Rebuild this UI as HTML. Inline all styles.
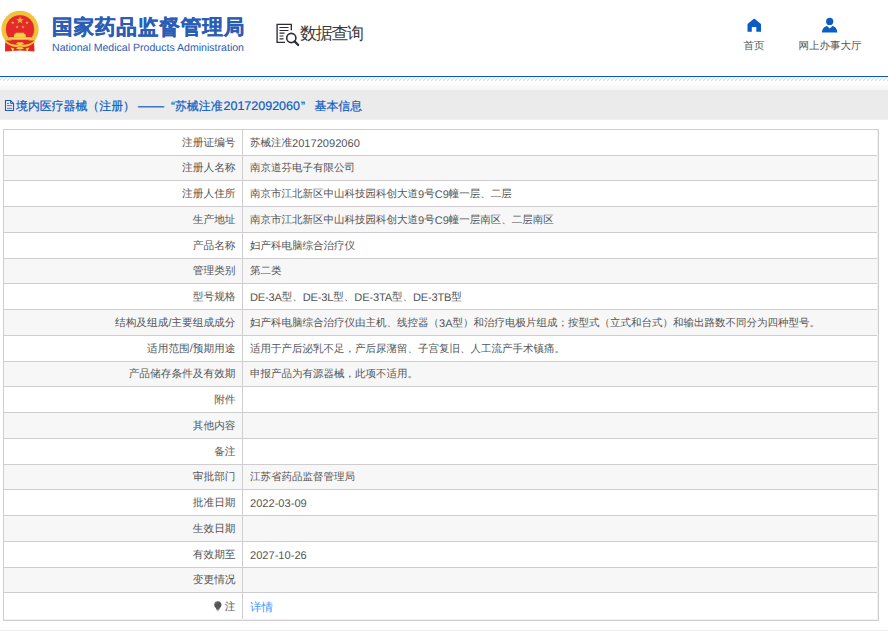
<!DOCTYPE html>
<html><head><meta charset="utf-8">
<style>
*{margin:0;padding:0;box-sizing:border-box}
html,body{width:888px;height:631px;overflow:hidden;background:#fff;font-family:"Liberation Sans",sans-serif;text-rendering:geometricPrecision}
.abs{position:absolute}
#logo-cn{position:absolute;left:52px;top:12.5px;font-size:20.6px;letter-spacing:0.86px;font-weight:bold;-webkit-text-stroke:0.35px #2a5db5;color:#2a5db5;white-space:nowrap;line-height:30px}
#logo-en{position:absolute;left:52px;top:41.3px;font-size:10.57px;color:#2a5db5;white-space:nowrap;line-height:14px}
#sjcx{position:absolute;left:300px;top:21.5px;font-size:17px;letter-spacing:-1.3px;color:#3a3a3a;line-height:24px;white-space:nowrap}
.nav{position:absolute;top:39px;font-size:10.5px;color:#555;line-height:14px;white-space:nowrap;text-align:center}
#blue{position:absolute;left:0;top:76px;width:888px;height:1px;background:#0a5cc0}
#hatch{position:absolute;left:0;top:77px;width:888px;height:5px}
#grad{position:absolute;left:0;top:82px;width:888px;height:8px;background:linear-gradient(#fff,#f4f4f4)}
#bar{position:absolute;left:0;top:90px;width:888px;height:30px;background:#ebebeb}
#title{position:absolute;left:16px;top:97px;font-size:11.9px;color:#0b5cc6;-webkit-text-stroke:0.2px #0b5cc6;line-height:18px;white-space:nowrap}
#title span{position:absolute;top:0}
#tbl{position:absolute;left:3px;top:129px;width:876px;height:492px;border:1px solid #d0cdd0}
.row{position:absolute;left:0;width:874px}
.hl{position:absolute;left:0;width:874px;height:1px;background:#d0cdd0}
.k{position:absolute;left:0;top:0;width:238px;height:100%;text-align:right;padding-right:6.5px;padding-top:2.4px;font-size:10.7px;color:#555;display:flex;align-items:center;justify-content:flex-end;white-space:nowrap}
.v{position:absolute;left:239px;top:0;right:0;height:100%;padding-left:7px;padding-top:2.4px;font-size:10.5px;color:#555;display:flex;align-items:center;white-space:nowrap}
#vl{position:absolute;left:238px;top:0;width:1px;height:490px;background:#d0cdd0}
.link{color:#3d95fb;font-size:11.6px;position:relative;top:0.6px}
.lat{font-size:11.1px}
.lat2{letter-spacing:-0.18px}
.bulb{margin-right:2.6px;position:relative;top:-1.6px}
#bottomline{position:absolute;left:0;top:630px;width:888px;height:1px;background:#ececec}
</style></head><body>
<svg class="abs" style="left:0;top:0" width="44" height="56" viewBox="0 0 44 56">
  <circle cx="20" cy="29.3" r="18.6" fill="#f2c23a"/>
  <circle cx="20" cy="29.3" r="14.6" fill="#d8b43a"/>
  <circle cx="20" cy="29.3" r="14.1" fill="#e8282a"/>
  <path d="M20.00,16.20 L20.96,18.97 L23.90,19.03 L21.56,20.81 L22.41,23.62 L20.00,21.94 L17.59,23.62 L18.44,20.81 L16.10,19.03 L19.04,18.97Z" fill="#d8b83a"/>
  <path d="M12.80,20.80 L13.25,22.09 L14.61,22.11 L13.52,22.93 L13.92,24.24 L12.80,23.46 L11.68,24.24 L12.08,22.93 L10.99,22.11 L12.35,22.09Z M27.00,20.80 L27.45,22.09 L28.81,22.11 L27.72,22.93 L28.12,24.24 L27.00,23.46 L25.88,24.24 L26.28,22.93 L25.19,22.11 L26.55,22.09Z M17.10,25.10 L17.55,26.39 L18.91,26.41 L17.82,27.23 L18.22,28.54 L17.10,27.76 L15.98,28.54 L16.38,27.23 L15.29,26.41 L16.65,26.39Z M23.00,25.10 L23.45,26.39 L24.81,26.41 L23.72,27.23 L24.12,28.54 L23.00,27.76 L21.88,28.54 L22.28,27.23 L21.19,26.41 L22.55,26.39Z" fill="#d2b240"/>
  <path d="M15.3 34.2 L15.6 32.7 L24.1 32.7 L24.4 34.2 H25.7 V37.2 H14 V34.2 Z" fill="#f3cf45"/>
  <path d="M8.8 37.2 H31.5 V39.7 H8.8 Z" fill="#f6d84a"/>
  <path d="M5.2 40.4 L34 40.4 L34.5 51.6 L28 51 L20 50.5 L12 51 L5 51.6 Z" fill="#e3262a"/>
  <path d="M5 40 Q12 46 20 44.6 Q28 46 35 40 L35 42.2 Q28 48.2 20 46.6 Q12 48.2 5 42.2 Z" fill="#f2c53a"/>
  <path d="M16 43.8 Q18 41 20 42.6 Q22 41 24 43.8 Q20 46.5 16 43.8 Z" fill="#f2c53a"/>
  <path d="M16 48.2 Q20 45.8 24 48.2 Q20 50.6 16 48.2 Z M11 47.4 L14.2 48.4 L13.2 51.5 L12.2 51.5 Z M29 47.4 L25.8 48.4 L26.8 51.5 L27.8 51.5 Z" fill="#f3d043"/>
</svg>
<div id="logo-cn">国家药品监督管理局</div>
<div id="logo-en">National Medical Products Administration</div>
<svg class="abs" style="left:274px;top:22px" width="28" height="26" viewBox="0 0 28 26">
  <path d="M17.3 8.3V2.3H3.1V20.4H11" fill="none" stroke="#2b2b3a" stroke-width="1.35"/>
  <path d="M5.5 5.5H14.5M5.5 8.5H14.5M5.5 11.2H10.5M5.5 14H9.5M5.5 16.8H9.5" stroke="#2b2b3a" stroke-width="1.2"/>
  <circle cx="17.3" cy="16" r="4.6" fill="none" stroke="#2b2b3a" stroke-width="1.6"/>
  <path d="M20.6 19.4L24.2 23" stroke="#2b2b3a" stroke-width="2.2" stroke-linecap="round"/>
</svg>
<div id="sjcx">数据查询</div>
<svg class="abs" style="left:747px;top:18px" width="15" height="14" viewBox="0 0 15 14">
  <path d="M7.2 0.6 L14 6 V13.7 H9.3 V9.1 H4.8 V13.7 H0.5 V6 Z" fill="#0a5bc6"/>
</svg>
<div class="nav" style="left:734px;width:40px">首页</div>
<svg class="abs" style="left:821px;top:17px" width="17" height="16" viewBox="0 0 17 16">
  <circle cx="8.7" cy="4.4" r="3.6" fill="#0b5cc5"/>
  <path d="M1 15.5 C1 12 3.5 9.3 6 9 L8.7 11.5 L11.4 9 C14 9.3 16.3 12 16.3 15.5 Z" fill="#0b5cc5"/>
</svg>
<div class="nav" style="left:790px;width:80px">网上办事大厅</div>
<div id="blue"></div><svg id="hatch" width="888" height="5"><defs><pattern id="hp" width="4" height="4" patternUnits="userSpaceOnUse" x="3"><path d="M5 -1 L-1 5" stroke="#e0e0e0" stroke-width="1.25"/></pattern></defs><rect x="0" y="0" width="888" height="4" fill="url(#hp)"/></svg><div id="grad"></div><div id="bar"></div><div style="position:absolute;left:0;top:119px;width:888px;height:1px;background:#ebeef5"></div>
<svg class="abs" style="left:0;top:95px" width="20" height="20" viewBox="0 0 20 20">
  <path d="M5.5 5.5H10.6L13.5 8.4V15.5H5.5Z" fill="none" stroke="#1f5cc8" stroke-width="1.1"/>
  <path d="M10.6 5.5V8.4H13.5" fill="none" stroke="#1f5cc8" stroke-width="1"/>
  <path d="M7 8.5H9M7 10.6H12M7 13.4H12" fill="none" stroke="#5a6ad0" stroke-width="0.9"/>
</svg>
<div id="title"><span style="left:0">境内医疗器械（注册）</span><span id="t2" style="left:122px;font-size:13px">——</span><span id="t3" style="left:155px">“苏械注准</span><span id="t5" style="left:207.5px;font-size:12.5px">20172092060</span><span id="t6" style="left:285px">”</span><span id="t4" style="left:298.5px">基本信息</span></div>
<div id="tbl">
<div class="row" style="top:0px;height:25px;background:#fff"><div class="k">注册证编号</div><div class="v">苏械注准<span class="lat">20172092060</span></div></div>
<div class="hl" style="top:25px"></div>
<div class="row" style="top:26px;height:24px;background:#f7f7f7"><div class="k">注册人名称</div><div class="v">南京道芬电子有限公司</div></div>
<div class="hl" style="top:50px"></div>
<div class="row" style="top:51px;height:25px;background:#fff"><div class="k">注册人住所</div><div class="v">南京市江北新区中山科技园科创大道<span class="lat">9</span>号<span class="lat">C9</span>幢一层、二层</div></div>
<div class="hl" style="top:76px"></div>
<div class="row" style="top:77px;height:25px;background:#f7f7f7"><div class="k">生产地址</div><div class="v">南京市江北新区中山科技园科创大道<span class="lat">9</span>号<span class="lat">C9</span>幢一层南区、二层南区</div></div>
<div class="hl" style="top:102px"></div>
<div class="row" style="top:103px;height:25px;background:#fff"><div class="k">产品名称</div><div class="v">妇产科电脑综合治疗仪</div></div>
<div class="hl" style="top:128px"></div>
<div class="row" style="top:129px;height:24px;background:#f7f7f7"><div class="k">管理类别</div><div class="v">第二类</div></div>
<div class="hl" style="top:153px"></div>
<div class="row" style="top:154px;height:25px;background:#fff"><div class="k">型号规格</div><div class="v"><span class="lat lat2">DE-3A</span>型、<span class="lat lat2">DE-3L</span>型、<span class="lat lat2">DE-3TA</span>型、<span class="lat lat2">DE-3TB</span>型</div></div>
<div class="hl" style="top:179px"></div>
<div class="row" style="top:180px;height:25px;background:#f7f7f7"><div class="k">结构及组成/主要组成成分</div><div class="v">妇产科电脑综合治疗仪由主机、线控器（<span class="lat">3A</span>型）和治疗电极片组成；按型式（立式和台式）和输出路数不同分为四种型号。</div></div>
<div class="hl" style="top:205px"></div>
<div class="row" style="top:206px;height:25px;background:#fff"><div class="k">适用范围/预期用途</div><div class="v">适用于产后泌乳不足，产后尿潴留、子宫复旧、人工流产手术镇痛。</div></div>
<div class="hl" style="top:231px"></div>
<div class="row" style="top:232px;height:24px;background:#f7f7f7"><div class="k">产品储存条件及有效期</div><div class="v">申报产品为有源器械，此项不适用。</div></div>
<div class="hl" style="top:256px"></div>
<div class="row" style="top:257px;height:25px;background:#fff"><div class="k">附件</div><div class="v"></div></div>
<div class="hl" style="top:282px"></div>
<div class="row" style="top:283px;height:25px;background:#f7f7f7"><div class="k">其他内容</div><div class="v"></div></div>
<div class="hl" style="top:308px"></div>
<div class="row" style="top:309px;height:25px;background:#fff"><div class="k">备注</div><div class="v"></div></div>
<div class="hl" style="top:334px"></div>
<div class="row" style="top:335px;height:24px;background:#f7f7f7"><div class="k">审批部门</div><div class="v">江苏省药品监督管理局</div></div>
<div class="hl" style="top:359px"></div>
<div class="row" style="top:360px;height:25px;background:#fff"><div class="k">批准日期</div><div class="v"><span class="lat">2022-03-09</span></div></div>
<div class="hl" style="top:385px"></div>
<div class="row" style="top:386px;height:25px;background:#f7f7f7"><div class="k">生效日期</div><div class="v"></div></div>
<div class="hl" style="top:411px"></div>
<div class="row" style="top:412px;height:25px;background:#fff"><div class="k">有效期至</div><div class="v"><span class="lat">2027-10-26</span></div></div>
<div class="hl" style="top:437px"></div>
<div class="row" style="top:438px;height:24px;background:#f7f7f7"><div class="k">变更情况</div><div class="v"></div></div>
<div class="hl" style="top:462px"></div>
<div class="row" style="top:463px;height:27px;background:#fff"><div class="k"><svg class="bulb" width="8" height="11" viewBox="0 0 8 11"><path d="M3.8 0.3C1.7 0.3 0.2 1.9 0.2 3.8c0 1.5.8 2.4 1.5 3.3c.4.5.7 1.1.8 1.7h2.7c.1-.6.4-1.2.8-1.7c.7-.9 1.5-1.8 1.5-3.3C7.5 1.9 5.9 0.3 3.8 0.3z" fill="#555"/><path d="M1.6 2.6Q2.2 1.5 3.3 1.3" stroke="#8a9ab8" stroke-width="0.7" fill="none"/><rect x="2.5" y="8.9" width="2.7" height="1.3" fill="#c8c8c8"/></svg>注</div><div class="v"><span class="link">详情</span></div></div>
<div id="vl"></div>
<div style="position:absolute;left:873px;top:0;width:1px;height:490px;background:#eef1f9"></div>
<div style="position:absolute;left:0;top:489px;width:874px;height:1px;background:#eff1f9"></div>
</div>
<div id="bottomline"></div>
</body></html>
